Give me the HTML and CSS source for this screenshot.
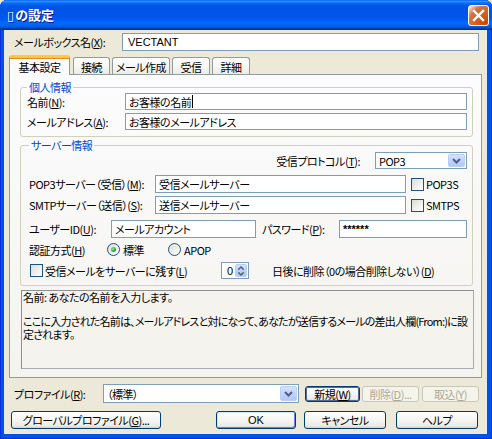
FILE: index.html
```html
<!DOCTYPE html>
<html lang="ja">
<head>
<meta charset="utf-8">
<title>の設定</title>
<link rel="stylesheet" href="styles.css">
</head>
<body>
<div class="window">
  <div class="titlebar">
    <span class="title"><span class="tofu">▯</span>の設定</span>
    <span class="close">
      <svg width="13" height="13" viewBox="0 0 13 13"><path d="M2 2 L11 11 M11 2 L2 11" stroke="#fff" stroke-width="2.4" stroke-linecap="square"/></svg>
    </span>
  </div>
  <div class="client">
    <div class="mailbox-row">
      <span class="mb-label">メールボックス名(<u>X</u>):</span>
      <span class="textbox mb-input">VECTANT</span>
    </div>
    <div class="tabs">
      <span class="tab tab-active">基本設定</span>
      <span class="tab tab-w37">接続</span>
      <span class="tab tab-w58">メール作成</span>
      <span class="tab tab-w38">受信</span>
      <span class="tab tab-w38">詳細</span>
    </div>
    <div class="panel">
      <fieldset class="group group-personal">
        <legend>個人情報</legend>
        <div class="frow frow-first">
          <span class="flabel w98">名前(<u>N</u>):</span>
          <span class="textbox grow">お客様の名前<span class="caret"></span></span>
        </div>
        <div class="frow">
          <span class="flabel w98">メールアドレス(<u>A</u>):</span>
          <span class="textbox grow">お客様のメールアドレス</span>
        </div>
      </fieldset>
      <fieldset class="group group-server">
        <legend>サーバー情報</legend>
        <div class="srow srow-proto">
          <span class="proto-label">受信プロトコル(<u>T</u>):</span>
          <span class="combo proto-combo">
            <span class="combo-text">POP3</span>
            <span class="combo-btn"><svg width="9" height="6" viewBox="0 0 9 6"><path d="M1 1 L4.5 4.5 L8 1" fill="none" stroke="#4D6185" stroke-width="2"/></svg></span>
          </span>
        </div>
        <div class="srow srow-server">
          <span class="flabel w126">POP3サーバー（受信）(<u>M</u>):</span>
          <span class="textbox server-input">受信メールサーバー</span>
          <span class="check check-after"></span>
          <span class="check-text">POP3S</span>
        </div>
        <div class="srow srow-smtp">
          <span class="flabel w126">SMTPサーバー（送信）(<u>S</u>):</span>
          <span class="textbox server-input">送信メールサーバー</span>
          <span class="check check-after"></span>
          <span class="check-text">SMTPS</span>
        </div>
        <div class="srow srow-user">
          <span class="flabel w82">ユーザーID(<u>U</u>):</span>
          <span class="textbox user-input">メールアカウント</span>
          <span class="pw-label">パスワード(<u>P</u>):</span>
          <span class="textbox grow pw-text">******</span>
        </div>
        <div class="srow srow-auth">
          <span class="flabel w78">認証方式(<u>H</u>)</span>
          <span class="radio-item w61"><span class="radio radio-on"></span><span class="radio-text">標準</span></span>
          <span class="radio-item"><span class="radio"></span><span class="radio-text">APOP</span></span>
        </div>
        <div class="srow srow-keep">
          <span class="keep-check"><span class="check check-keep"></span><span class="check-label">受信メールをサーバーに残す(<u>L</u>)</span></span>
          <span class="spin">
            <span class="spin-text">0</span>
            <span class="spin-btn"><svg width="11" height="14" viewBox="0 0 11 14"><path d="M2.5 5.5 L5.5 2.5 L8.5 5.5 M2.5 8.5 L5.5 11.5 L8.5 8.5" fill="none" stroke="#4D6185" stroke-width="1.6"/></svg></span>
          </span>
          <span class="days-text">日後に削除（0の場合削除しない）(<u>D</u>)</span>
        </div>
      </fieldset>
      <div class="desc">
        <p>名前: あなたの名前を入力します。</p>
        <p class="desc-para">ここに入力された名前は、メールアドレスと対になって、あなたが送信するメールの差出人欄(From:)に設<br>定されます。</p>
      </div>
    </div>
    <div class="profile-row">
      <span class="profile-label">プロファイル(<u>R</u>):</span>
      <span class="combo profile-combo">
        <span class="combo-text">（標準）</span>
        <span class="combo-btn"><svg width="9" height="6" viewBox="0 0 9 6"><path d="M1 1 L4.5 4.5 L8 1" fill="none" stroke="#4D6185" stroke-width="2"/></svg></span>
      </span>
      <span class="btn small-btn btn-new">新規(<u>W</u>)</span>
      <span class="btn small-btn btn-disabled btn-del">削除(<u>D</u>)...</span>
      <span class="btn small-btn btn-disabled btn-imp">取込(<u>Y</u>)</span>
    </div>
    <div class="button-row">
      <span class="btn big-btn btn-global">グローバルプロファイル(<u>G</u>)...</span>
      <span class="btn big-btn btn-default btn-ok">OK</span>
      <span class="btn big-btn btn-cancel">キャンセル</span>
      <span class="btn big-btn btn-help">ヘルプ</span>
    </div>
  </div>
</div>
</body>
</html>
```

FILE: styles.css
```css
* { box-sizing: border-box; }
html, body { margin: 0; padding: 0; }
body {
  width: 492px;
  height: 439px;
  overflow: hidden;
  background: #ECE9D8;
  font-family: "Noto Sans CJK JP", "Liberation Sans", sans-serif;
  font-size: 11px;
  letter-spacing: -0.5px;
  font-feature-settings: "palt";
  color: #000;
}
u { text-decoration: underline; text-underline-offset: 1px; }

.window {
  width: 492px;
  height: 439px;
  display: flex;
  flex-direction: column;
  background: #0053E8;
  border-radius: 7px 7px 0 0;
  overflow: hidden;
  box-shadow: inset 0 0 0 1px #0831D9;
}
.titlebar {
  height: 30px;
  flex: none;
  display: flex;
  align-items: center;
  padding: 0 3px 0 7px;
  background: linear-gradient(to bottom, #0058EE 0%, #3593FF 4%, #288EFF 6%, #127DFF 8%, #036FFC 10%, #0262EE 14%, #0057E5 20%, #0054E3 24%, #0055EB 56%, #005BF5 66%, #026AFE 76%, #0062EF 86%, #0052D6 92%, #0040AB 94%, #003092 100%);
}
.title {
  flex: 1;
  color: #fff;
  font-weight: bold;
  font-size: 13px;
  letter-spacing: 0;
  line-height: 16px;
  text-shadow: 1px 1px 0 #0A1889;
}
.tofu { font-family: "DejaVu Sans", sans-serif; font-weight: bold; margin-right: 1px; }
.close {
  width: 21px;
  height: 21px;
  border: 1px solid #fff;
  border-radius: 3px;
  background: radial-gradient(circle at 90% 90%, #CC4600 0%, #DC6527 55%, #CD7546 70%, #FFCCB2 90%, #fff 100%);
  display: flex;
  align-items: center;
  justify-content: center;
}

.client {
  flex: 1;
  margin: 0 5px 5px 4px;
  background: #ECE9D8;
  display: flex;
  flex-direction: column;
}

.mailbox-row {
  margin-top: 3px;
  height: 18px;
  padding-left: 10px;
  display: flex;
  align-items: center;
}
.mb-label { width: 108px; line-height: 14px; white-space: nowrap; }
.textbox {
  height: 100%;
  border: 1px solid #7F9DB9;
  background: #fff;
  padding: 0 3px;
  white-space: nowrap;
  overflow: hidden;
  display: flex;
  align-items: center;
  line-height: 14px;
}
.mb-input { width: 357px; padding-left: 5px; font-family: "Liberation Sans", sans-serif; letter-spacing: 0; }
.caret { display: inline-block; width: 1px; height: 13px; background: #000; margin-left: 1px; }

.tabs {
  margin-top: 4px;
  margin-left: 5px;
  margin-bottom: -1px;
  height: 20px;
  display: flex;
  align-items: flex-end;
  position: relative;
  z-index: 1;
}
.tab {
  height: 17px;
  margin-bottom: 1px;
  margin-left: 2px;
  border: 1px solid #919B9C;
  border-bottom: none;
  border-radius: 3px 3px 0 0;
  background: linear-gradient(#FFFFFF, #F7F7F4 50%, #ECEBE5);
  display: flex;
  align-items: center;
  justify-content: center;
  line-height: 14px;
  padding-top: 1px;
  white-space: nowrap;
}
.tab-active {
  width: 61px;
  height: 20px;
  margin: 0;
  background: #FCFCFE;
  border-top: 3px solid #FFC83C;
  box-shadow: inset 0 1px 0 #E68B2C;
  padding-top: 0;
}
.tab-w37 { width: 37px; margin-left: 3px; }
.tab-w58 { width: 58px; }
.tab-w38 { width: 38px; }

.panel {
  margin: 0 5px 0 5px;
  height: 304px;
  border: 1px solid #919B9C;
  background: linear-gradient(#FCFCFE, #F4F3EE);
  padding: 0 8px 0 10px;
}

.group {
  margin: 0;
  min-width: 0;
  border: 1px solid #D0D0BF;
  border-radius: 3px;
  padding: 0 5px 7px 6px;
}
.group legend {
  padding: 0 2px;
  margin-left: 0;
  height: 12px;
  line-height: 12px;
  color: #0046D5;
}
.group-personal { margin-top: 6px; padding-bottom: 6px; }
.group-server { margin-top: 2px; padding: 0 5px 6px 8px; }

.frow { display: flex; align-items: center; height: 17px; margin-top: 3px; }
.frow-first { margin-top: 0; }
.flabel { flex: none; white-space: nowrap; line-height: 14px; }
.w98 { width: 98px; }
.w126 { width: 126px; }
.w82 { width: 82px; }
.w78 { width: 78px; }
.w61 { width: 61px; }
.grow { flex: 1; min-width: 0; }

.srow { display: flex; align-items: center; height: 18px; line-height: 14px; white-space: nowrap; }
.srow-proto { height: 17px; margin-top: 1px; justify-content: flex-end; }
.srow-server { margin-top: 6px; }
.srow-smtp { margin-top: 3px; }
.srow-user { margin-top: 6px; }
.srow-auth { margin-top: 3px; height: 17px; }
.srow-keep { margin-top: 4px; height: 17px; }

.proto-label { margin-right: 15px; }
.combo {
  height: 100%;
  border: 1px solid #7F9DB9;
  background: #fff;
  display: flex;
  align-items: center;
}
.combo-text { flex: 1; padding-left: 3px; line-height: 14px; white-space: nowrap; }
.combo-btn {
  width: 17px;
  align-self: stretch;
  margin: 1px;
  border: 1px solid #B9CDF7;
  border-radius: 2px;
  background: linear-gradient(#D6E3FD, #C1D3FB 50%, #B3C8F7);
  display: flex;
  align-items: center;
  justify-content: center;
}
.proto-combo { width: 92px; }

.server-input { width: 251px; }
.check {
  flex: none;
  width: 13px;
  height: 13px;
  border: 1px solid #1C5180;
  background: linear-gradient(135deg, #DCDCD7, #FFFFFF);
}
.check-after { margin-left: 5px; }
.check-text { margin-left: 2px; }

.user-input { width: 145px; }
.pw-label { width: 77px; margin-left: 6px; }
.pw-text { font-family: "Liberation Sans", sans-serif; font-weight: bold; font-size: 11px; letter-spacing: 0; }

.radio-item { display: flex; align-items: center; }
.radio {
  flex: none;
  width: 13px;
  height: 13px;
  border-radius: 50%;
  border: 1px solid #1C5180;
  background: linear-gradient(135deg, #DCDCD7, #FFFFFF);
  display: flex;
  align-items: center;
  justify-content: center;
}
.radio-on::after {
  content: "";
  width: 5px;
  height: 5px;
  border-radius: 50%;
  background: radial-gradient(circle at 35% 35%, #8DE38D, #21A121 70%);
}
.radio-text { margin-left: 3px; }

.keep-check { width: 192px; display: flex; align-items: center; }
.check-keep { margin-left: 1px; }
.check-label { margin-left: 2px; }
.spin {
  width: 28px;
  height: 100%;
  border: 1px solid #7F9DB9;
  background: #fff;
  display: flex;
  align-items: center;
}
.spin-text { flex: 1; text-align: right; padding-right: 2px; font-family: "Liberation Sans", sans-serif; letter-spacing: 0; }
.spin-btn {
  width: 12px;
  align-self: stretch;
  margin: 1px 1px 1px 0;
  border: 1px solid #B9CDF7;
  border-radius: 2px;
  background: linear-gradient(#D6E3FD, #C1D3FB 50%, #B3C8F7);
  display: flex;
  align-items: center;
  justify-content: center;
}
.days-text { margin-left: 23px; }

.desc {
  margin-top: 4px;
  margin-left: 1px;
  width: 453px;
  height: 79px;
  border: 1px solid #A5ACB2;
  border-top-color: #8E8F8F;
  border-left-color: #8E8F8F;
  background: #F4F3EE;
  padding: 0 0 0 1px;
  overflow: hidden;
}
.desc p { margin: 0; line-height: 12px; white-space: nowrap; }
.desc .desc-para { margin-top: 12px; line-height: 13px; letter-spacing: -0.8px; }

.profile-row {
  margin-top: 6px;
  height: 19px;
  padding-left: 10px;
  display: flex;
  align-items: center;
  white-space: nowrap;
}
.profile-label { width: 89px; line-height: 14px; }
.profile-combo { width: 196px; }

.btn {
  flex: none;
  display: flex;
  align-items: center;
  justify-content: center;
  border: 1px solid #003C74;
  border-radius: 3px;
  background: linear-gradient(#FFFFFF, #F5F5F2 50%, #ECEBE5 85%, #D6D0C5);
  line-height: 14px;
  white-space: nowrap;
}
.small-btn { height: 16px; }
.btn-new { width: 55px; margin-left: 6px; box-shadow: inset 0 0 0 1px #506C95; }
.btn-del { width: 57px; margin-left: 2px; }
.btn-imp { width: 57px; margin-left: 3px; }
.btn-disabled {
  border-color: #C9C7BA;
  background: #F5F4EA;
  color: #ACA899;
}

.button-row {
  margin-top: 8px;
  height: 18px;
  display: flex;
}
.big-btn { height: 18px; }
.btn-global { width: 150px; margin-left: 7px; }
.btn-ok { width: 80px; margin-left: 55px; font-family: "Liberation Sans", "Noto Sans CJK JP", sans-serif; letter-spacing: 0; }
.btn-default { box-shadow: inset 1px 1px 0 #CEE7FF, inset -1px -1px 0 #6982EE; }
.btn-cancel { width: 82px; margin-left: 8px; }
.btn-help { width: 82px; margin-left: 10px; }
```
